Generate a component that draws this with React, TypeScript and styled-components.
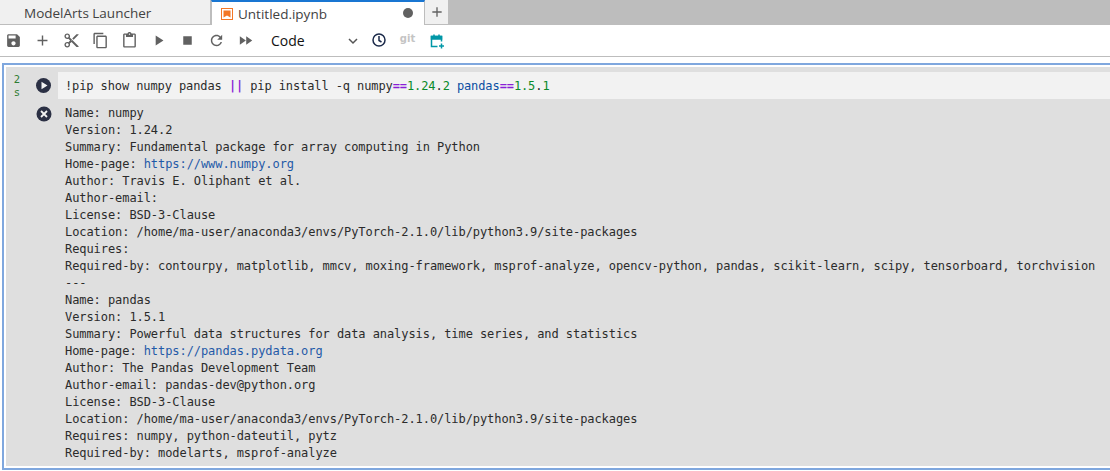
import React from "react";
import styled, { createGlobalStyle } from "styled-components";

const Global = createGlobalStyle`
  html, body { margin: 0; padding: 0; background: #fff; overflow: hidden; }
`;

const Page = styled.div`
  width: 1110px;
  height: 471px;
  display: flex;
  flex-direction: column;
  background: #fff;
  font-family: "Open Sans", "Noto Sans", sans-serif;
`;

const TabBar = styled.div`
  height: 25px;
  display: flex;
  background: #bdbdbd;
  flex: none;
`;

const Tab = styled.div<{ $active?: boolean; $w: number }>`
  width: ${(p) => p.$w}px;
  box-sizing: border-box;
  display: flex;
  align-items: center;
  color: #424242;
  font-size: 13.5px;
  background: ${(p) => (p.$active ? "#fff" : "#f0f0f0")};
  border-right: 1px solid #bdbdbd;
  border-top: ${(p) => (p.$active ? "2px solid #1976d2" : "none")};
  border-left: ${(p) => (p.$active ? "1px solid #bdbdbd" : "none")};
  border-bottom: ${(p) => (p.$active ? "none" : "1px solid #bdbdbd")};
  padding-left: ${(p) => (p.$active ? 9 : 24)}px;
  padding-top: ${(p) => (p.$active ? 0 : 2)}px;
  gap: 5px;
`;

const TabTitle = styled.span`
  flex: 1;
`;

const DirtyDot = styled.span`
  width: 10px;
  height: 10px;
  border-radius: 50%;
  background: #616161;
  margin-right: 11px;
  margin-top: -1px;
`;

const AddTab = styled.div`
  width: 24px;
  box-sizing: border-box;
  display: flex;
  align-items: center;
  justify-content: center;
  background: #f0f0f0;
  border-right: 1px solid #bdbdbd;
  border-bottom: 1px solid #bdbdbd;
  padding-left: 1px;
`;

const Toolbar = styled.div`
  height: 32px;
  box-sizing: border-box;
  flex: none;
  display: flex;
  align-items: center;
  border-bottom: 1px solid #bdbdbd;
`;

const ToolButton = styled.span`
  width: 29px;
  height: 24px;
  flex: none;
  display: flex;
  align-items: center;
  justify-content: center;
  &:first-child { margin-left: -1.5px; }
`;

const CellType = styled.div`
  width: 88px;
  margin-left: 11.5px;
  margin-right: 5px;
  flex: none;
  display: flex;
  align-items: center;
  justify-content: space-between;
  font-size: 14px;
  color: #111;
`;

const GitLabel = styled.span`
  font-family: "DejaVu Sans", sans-serif;
  font-size: 10px;
  font-weight: 700;
  color: #c4c4c4;
  margin-top: -4px;
`;

const Cell = styled.div`
  margin: 6px 0 0 2px;
  border: solid #7fa7de;
  border-width: 2px 0 2px 2px;
  padding: 2px 0 2px 2px;
  flex: none;
`;

const Panel = styled.div`
  background: #dfdfdf;
  padding: 5px 0 4px;
  display: flex;
  flex-direction: column;
  gap: 6px;
  font-family: "DejaVu Sans Mono", monospace;
  font-size: 12px;
  line-height: 17px;
  color: #2b2b2b;
`;

const InputRow = styled.div`
  display: flex;
  height: 27px;
`;

const Gutter = styled.div`
  width: 52px;
  flex: none;
  display: flex;
  align-items: center;
  box-sizing: border-box;
  padding-left: 4px;
`;

const Timer = styled.div`
  width: 14px;
  display: flex;
  flex-direction: column;
  align-items: center;
  font-size: 10.5px;
  line-height: 12.5px;
  color: #2e7d32;
  margin-right: 11px;
`;

const CodeLine = styled.div`
  flex: 1;
  box-sizing: border-box;
  background: #f2f2f2;
  padding: 1px 0 0 7px;
  line-height: 27px;
  white-space: pre;
  letter-spacing: -0.1px;
`;

const Op = styled.span`
  color: #8a1fd6;
  font-weight: 700;
`;
const Num = styled.span`
  color: #0a8a2a;
`;
const Prop = styled.span`
  color: #0b4ea2;
`;

const OutputRow = styled.div`
  display: flex;
`;

const OutputGutter = styled.div`
  width: 52px;
  flex: none;
  box-sizing: border-box;
  padding: 1px 0 0 30px;
`;

const Output = styled.pre`
  margin: 0 0 0 7px;
  font: inherit;
  white-space: pre;
  letter-spacing: -0.07px;
`;

const Link = styled.span`
  color: #1f5aa8;
`;

const Ico = ({ d, size = 17, color = "#616161" }: { d: string; size?: number; color?: string }) => (
  <svg width={size} height={size} viewBox="0 0 24 24" fill={color}>
    <path d={d} />
  </svg>
);

const icons = [
  "M17 3H5c-1.11 0-2 .9-2 2v14c0 1.1.89 2 2 2h14c1.1 0 2-.9 2-2V7l-4-4zm-5 16c-1.66 0-3-1.34-3-3s1.34-3 3-3 3 1.34 3 3-1.34 3-3 3zm3-10H5V5h10v4z",
  "M19 13h-6v6h-2v-6H5v-2h6V5h2v6h6v2z",
  "M9.64 7.64c.23-.5.36-1.05.36-1.64 0-2.21-1.79-4-4-4S2 3.79 2 6s1.79 4 4 4c.59 0 1.14-.13 1.64-.36L10 12l-2.36 2.36C7.14 14.13 6.59 14 6 14c-2.21 0-4 1.79-4 4s1.79 4 4 4 4-1.79 4-4c0-.59-.13-1.14-.36-1.64L12 14l7 7h3v-1L9.64 7.64zM6 8c-1.1 0-2-.89-2-2s.9-2 2-2 2 .89 2 2-.9 2-2 2zm0 12c-1.1 0-2-.89-2-2s.9-2 2-2 2 .89 2 2-.9 2-2 2zm6-7.5c-.28 0-.5-.22-.5-.5s.22-.5.5-.5.5.22.5.5-.22.5-.5.5zM19 3l-6 6 2 2 7-7V3z",
  "M16 1H4c-1.1 0-2 .9-2 2v14h2V3h12V1zm3 4H8c-1.1 0-2 .9-2 2v14c0 1.1.9 2 2 2h11c1.1 0 2-.9 2-2V7c0-1.1-.9-2-2-2zm0 16H8V7h11v14z",
  "M19 2h-4.18C14.4.84 13.3 0 12 0c-1.3 0-2.4.84-2.82 2H5c-1.1 0-2 .9-2 2v16c0 1.1.9 2 2 2h14c1.1 0 2-.9 2-2V4c0-1.1-.9-2-2-2zm-7 0c.55 0 1 .45 1 1s-.45 1-1 1-1-.45-1-1 .45-1 1-1zm7 18H5V4h2v3h10V4h2v16z",
  "M8 5v14l11-7z",
  "M6 6h12v12H6z",
  "M17.65 6.35C16.2 4.9 14.21 4 12 4c-4.42 0-7.99 3.58-7.99 8s3.57 8 7.99 8c3.73 0 6.84-2.55 7.73-6h-2.08c-.82 2.33-3.04 4-5.65 4-3.31 0-6-2.69-6-6s2.69-6 6-6c1.66 0 3.14.69 4.22 1.78L13 11h7V4l-2.35 2.35z",
  "M4 18l8.5-6L4 6v12zm9-12v12l8.5-6L13 6z",
];

const before: React.ReactNode[] = [
  "Name: numpy",
  "Version: 1.24.2",
  "Summary: Fundamental package for array computing in Python",
  <>Home-page: <Link>https://www.numpy.org</Link></>,
  "Author: Travis E. Oliphant et al.",
  "Author-email:",
  "License: BSD-3-Clause",
  "Location: /home/ma-user/anaconda3/envs/PyTorch-2.1.0/lib/python3.9/site-packages",
  "Requires:",
  "Required-by: contourpy, matplotlib, mmcv, moxing-framework, msprof-analyze, opencv-python, pandas, scikit-learn, scipy, tensorboard, torchvision",
  "---",
  "Name: pandas",
  "Version: 1.5.1",
  "Summary: Powerful data structures for data analysis, time series, and statistics",
  <>Home-page: <Link>https://pandas.pydata.org</Link></>,
  "Author: The Pandas Development Team",
  "Author-email: pandas-dev@python.org",
  "License: BSD-3-Clause",
  "Location: /home/ma-user/anaconda3/envs/PyTorch-2.1.0/lib/python3.9/site-packages",
  "Requires: numpy, python-dateutil, pytz",
  "Required-by: modelarts, msprof-analyze",
];

export default function App() {
  return (
    <Page>
      <Global />
      <TabBar>
        <Tab $w={211}>ModelArts Launcher</Tab>
        <Tab $active $w={214}>
          <svg width="12" height="12" viewBox="0 0 12 12">
            <rect x="0.5" y="0.5" width="11" height="11" fill="#fff" stroke="#f37726" />
            <path d="M2.5 2.5h7v7L6 7.4 2.5 9.5z" fill="#f37726" />
          </svg>
          <TabTitle>Untitled.ipynb</TabTitle>
          <DirtyDot />
        </Tab>
        <AddTab>
          <Ico d="M19 13h-6v6h-2v-6H5v-2h6V5h2v6h6v2z" size={16} />
        </AddTab>
      </TabBar>
      <Toolbar>
        {icons.map((d) => (
          <ToolButton key={d}>
            <Ico d={d} />
          </ToolButton>
        ))}
        <CellType>
          Code
          <svg width="12" height="12" viewBox="0 0 12 12" fill="none" stroke="#555" strokeWidth="1.5">
            <path d="M2 4l4 4 4-4" />
          </svg>
        </CellType>
        <ToolButton>
          <svg width="16" height="16" viewBox="0 0 16 16" fill="none" stroke="#1b2a4a" strokeWidth="1.5">
            <circle cx="8" cy="7" r="6" />
            <path d="M8 3v4.5l2.5 1.5" />
          </svg>
        </ToolButton>
        <ToolButton>
          <GitLabel>git</GitLabel>
        </ToolButton>
        <ToolButton>
          <svg width="16" height="16" viewBox="0 0 16 16" fill="none" stroke="#0097a7" strokeWidth="1.5">
            <path d="M8.5 13.5H2.5v-10h10v5" />
            <path d="M2.5 3.5h10v2.5h-10z" fill="#0097a7" />
            <path d="M5 1.5v3M10 1.5v3M12.5 10.5v5M10 13h5" />
          </svg>
        </ToolButton>
      </Toolbar>
      <Cell>
        <Panel>
          <InputRow>
            <Gutter>
              <Timer>
                <span>2</span>
                <span>s</span>
              </Timer>
              <svg width="17" height="17" viewBox="0 0 17 17">
                <circle cx="8.5" cy="8.5" r="7.5" fill="#2b3044" />
                <path d="M6.5 4.8v7.4l6-3.7z" fill="#f2f2f2" />
              </svg>
            </Gutter>
            <CodeLine>
              !pip show numpy pandas <Op>||</Op> pip install -q numpy<Op>==</Op>
              <Num>1.24</Num>.<Num>2</Num> <Prop>pandas</Prop><Op>==</Op>
              <Num>1.5</Num>.<Num>1</Num>
            </CodeLine>
          </InputRow>
          <OutputRow>
            <OutputGutter>
              <svg width="16" height="16" viewBox="0 0 16 16">
                <circle cx="8" cy="8" r="7.5" fill="#2b3044" />
                <path d="M5 5l6 6M11 5l-6 6" stroke="#f2f2f2" strokeWidth="1.8" />
              </svg>
            </OutputGutter>
            <Output>
              {before.map((line, i) => (
                <div key={i}>{line}</div>
              ))}
            </Output>
          </OutputRow>
        </Panel>
      </Cell>
    </Page>
  );
}
